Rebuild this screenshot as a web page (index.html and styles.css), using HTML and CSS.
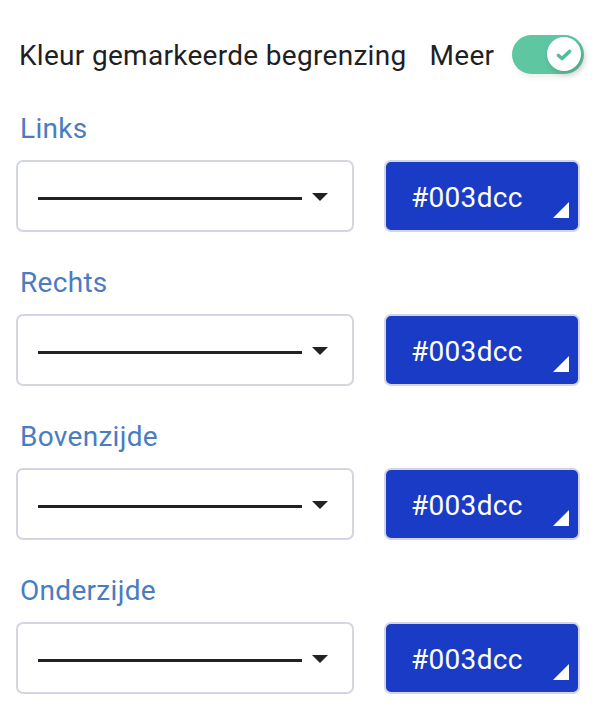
FILE: index.html
```html
<!DOCTYPE html>
<html lang="nl">
<head>
<meta charset="utf-8">
<title>Kleur gemarkeerde begrenzing</title>
<link rel="stylesheet" href="styles.css">
</head>
<body>
<div class="panel">
  <div class="header">
    <span class="title">Kleur gemarkeerde begrenzing</span>
    <span class="more">Meer</span>
    <span class="toggle"><span class="knob"><svg viewBox="0 0 16 12" width="16" height="12"><path d="M2.5 6.5 L6 9.5 L13.5 2.5" fill="none" stroke="#4dbf96" stroke-width="3.6" stroke-linecap="round" stroke-linejoin="round"/></svg></span></span>
  </div>

  <div class="group">
    <div class="label">Links</div>
    <div class="row">
      <div class="select"><span class="line"></span><span class="caret"></span></div>
      <div class="color"><span class="hex">#003dcc</span><span class="corner"></span></div>
    </div>
  </div>

  <div class="group">
    <div class="label">Rechts</div>
    <div class="row">
      <div class="select"><span class="line"></span><span class="caret"></span></div>
      <div class="color"><span class="hex">#003dcc</span><span class="corner"></span></div>
    </div>
  </div>

  <div class="group">
    <div class="label">Bovenzijde</div>
    <div class="row">
      <div class="select"><span class="line"></span><span class="caret"></span></div>
      <div class="color"><span class="hex">#003dcc</span><span class="corner"></span></div>
    </div>
  </div>

  <div class="group">
    <div class="label">Onderzijde</div>
    <div class="row">
      <div class="select"><span class="line"></span><span class="caret"></span></div>
      <div class="color"><span class="hex">#003dcc</span><span class="corner"></span></div>
    </div>
  </div>
</div>
</body>
</html>
```

FILE: styles.css
```css
html, body {
  margin: 0;
  padding: 0;
  background: #ffffff;
}

.panel {
  font-family: "Roboto", "Liberation Sans", sans-serif;
  font-size: 28px;
  letter-spacing: 0.3px;
  color: #1f1f24;
  padding: 34px 0 0 16px;
}

.header {
  display: flex;
  align-items: center;
  height: 40px;
  line-height: 40px;
  padding-left: 3px;
  white-space: nowrap;
}

.title {
  flex-shrink: 0;
  margin-top: 4px;
  margin-right: 23px;
}

.more {
  flex-shrink: 0;
  margin-top: 4px;
  margin-right: 18px;
}

.toggle {
  flex-shrink: 0;
  width: 72px;
  height: 39px;
  border-radius: 20px;
  background: #5ec7a2;
  display: flex;
  align-items: center;
  justify-content: flex-end;
  padding-right: 3px;
  box-sizing: border-box;
  box-shadow: 2px 3px 6px rgba(0, 0, 0, 0.08);
}

.knob {
  width: 34px;
  height: 34px;
  border-radius: 50%;
  background: #ffffff;
  display: flex;
  align-items: center;
  justify-content: center;
  box-shadow: 2px 3px 6px rgba(0, 0, 0, 0.18);
}

.knob svg {
  margin-top: 2px;
  margin-left: -1px;
}

.group {
  margin-top: 33px;
}

.group + .group {
  margin-top: 29px;
}

.label {
  color: #4a7cc1;
  height: 40px;
  line-height: 40px;
  padding-left: 4px;
  padding-top: 2px;
  margin-bottom: 11px;
}

.row {
  display: flex;
  gap: 30px;
}

.select {
  width: 338px;
  height: 72px;
  box-sizing: border-box;
  border: 2px solid #d3d6e2;
  border-radius: 7px;
  display: flex;
  align-items: center;
  padding-left: 20px;
  padding-top: 4px;
}

.line {
  width: 264px;
  height: 3px;
  background: #222226;
}

.caret {
  margin-left: 10px;
  margin-top: -3px;
  width: 0;
  height: 0;
  border-left: 8px solid transparent;
  border-right: 8px solid transparent;
  border-top: 8px solid #222226;
}

.color {
  width: 196px;
  height: 72px;
  box-sizing: border-box;
  border: 2px solid #d3d6e2;
  border-radius: 7px;
  background: #1a3bc5;
  color: #ffffff;
  display: flex;
  align-items: center;
  padding-left: 25px;
  padding-right: 9px;
}

.hex {
  flex: 1;
  padding-top: 2px;
}

.corner {
  align-self: flex-end;
  margin-bottom: 12px;
  width: 0;
  height: 0;
  border-left: 16px solid transparent;
  border-bottom: 16px solid #ffffff;
}
```
